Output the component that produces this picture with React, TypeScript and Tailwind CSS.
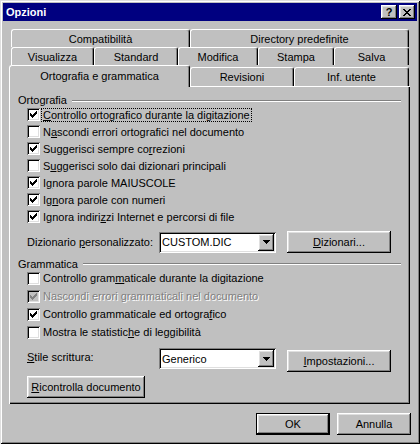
import React from 'react';

const raised =
  'shadow-[inset_-1px_-1px_0_#000,inset_1px_1px_0_#fff,inset_-2px_-2px_0_#808080,inset_2px_2px_0_#dfdfdf]';
const sunken =
  'shadow-[inset_1px_1px_0_#808080,inset_-1px_-1px_0_#fff,inset_2px_2px_0_#000,inset_-2px_-2px_0_#dfdfdf]';

const U = ({ children }: { children: React.ReactNode }) => (
  <span className="underline underline-offset-[1px]">{children}</span>
);

const CheckMark = ({ color }: { color: string }) => (
  <svg width="7" height="7" viewBox="0 0 7 7" shapeRendering="crispEdges" fill={color}>
    <rect x="6" y="0" width="1" height="1" />
    <rect x="5" y="1" width="2" height="1" />
    <rect x="0" y="2" width="1" height="1" />
    <rect x="4" y="2" width="3" height="1" />
    <rect x="0" y="3" width="2" height="1" />
    <rect x="3" y="3" width="3" height="1" />
    <rect x="0" y="4" width="5" height="1" />
    <rect x="1" y="5" width="3" height="1" />
    <rect x="2" y="6" width="1" height="1" />
  </svg>
);

type CheckProps = {
  checked?: boolean;
  disabled?: boolean;
  focused?: boolean;
  h: string;
  children: React.ReactNode;
};

const Check = ({ checked, disabled, focused, h, children }: CheckProps) => (
  <div className={`flex items-center ${h}`}>
    <div
      className={`w-[13px] h-[13px] shrink-0 flex items-center justify-center ${sunken} ${
        disabled ? 'bg-[#c0c0c0]' : 'bg-white'
      }`}
    >
      {checked && <CheckMark color={disabled ? '#808080' : '#000'} />}
    </div>
    <span
      className={`ml-[2px] px-[1px] leading-[12px] whitespace-nowrap ${
        focused ? 'outline outline-1 outline-dotted outline-black' : ''
      } ${disabled ? 'text-[#808080] [text-shadow:1px_1px_0_#fff]' : ''}`}
    >
      {children}
    </span>
  </div>
);

const Tab = ({ w, h, selected, children }: { w: string; h: string; selected?: boolean; children: React.ReactNode }) => (
  <div
    className={`${w} ${h} shrink-0 flex items-center justify-center bg-[#c0c0c0] border-l border-t border-r border-white border-r-black rounded-t-[3px] shadow-[inset_-1px_0_0_#808080] whitespace-nowrap ${
      selected ? 'relative z-10 self-start -ml-[2px] pb-[1px]' : 'pt-[1px]'
    }`}
  >
    {children}
  </div>
);

const Header = ({ label, className }: { label: string; className: string }) => (
  <div className={`flex items-center pl-[9px] pr-[9px] ${className}`}>
    <span className="leading-[12px]">{label}</span>
    <div className="flex-1 ml-[5px] mt-[1px] h-[2px] border-t border-t-[#808080] border-b border-b-white" />
  </div>
);

const Combo = ({ value }: { value: string }) => (
  <div className={`w-[117px] h-[21px] bg-white flex items-center p-[2px] ${sunken}`}>
    <span className="flex-1 pl-[1px] leading-[12px]">{value}</span>
    <div className={`w-[16px] h-[17px] bg-[#c0c0c0] flex items-center justify-center ${raised}`}>
      <svg width="7" height="4" viewBox="0 0 7 4" shapeRendering="crispEdges">
        <polygon points="0,0 7,0 3.5,4" fill="#000" />
      </svg>
    </div>
  </div>
);

const Btn = ({ w, className, children }: { w: string; className?: string; children: React.ReactNode }) => (
  <div className={`${w} h-[22px] bg-[#c0c0c0] flex items-center justify-center ${raised} ${className ?? ''}`}>
    {children}
  </div>
);

export default function App() {
  return (
    <div
      className={`w-[420px] h-[444px] bg-[#c0c0c0] p-[3px] flex flex-col text-[11px] text-black font-['Liberation_Sans',Arial,sans-serif] shadow-[inset_1px_1px_0_#dfdfdf,inset_-1px_-1px_0_#000,inset_2px_2px_0_#fff,inset_-2px_-2px_0_#808080]`}
    >
      {/* title bar */}
      <div className="h-[18px] bg-[#000080] flex items-center justify-between pl-[3px] pr-[2px]">
        <span className="text-white font-bold text-[11px] leading-[12px]">Opzioni</span>
        <div className="flex gap-[2px]">
          <div className={`w-[16px] h-[14px] bg-[#c0c0c0] flex items-center justify-center font-bold text-[11px] leading-[11px] ${raised}`}>
            ?
          </div>
          <div className={`w-[16px] h-[14px] bg-[#c0c0c0] flex items-center justify-center ${raised}`}>
            <svg width="8" height="7" viewBox="0 0 8 7" shapeRendering="crispEdges" fill="#000">
              <path d="M0 0h2v1h1v1h2v-1h1v-1h2v1h-1v1h-1v1h-1v1h1v1h1v1h1v1h-2v-1h-1v-1h-2v1h-1v1h-2v-1h1v-1h1v-1h1v-1h-1v-1h-1v-1h-1z" />
            </svg>
          </div>
        </div>
      </div>

      {/* tabs */}
      <div className="mt-[8px] pl-[8px] flex flex-col">
        <div className="flex">
          <Tab w="w-[179px]" h="h-[18px]">Compatibilità</Tab>
          <Tab w="w-[219px]" h="h-[18px]">Directory predefinite</Tab>
        </div>
        <div className="flex">
          <Tab w="w-[83px]" h="h-[18px]">Visualizza</Tab>
          <Tab w="w-[84px]" h="h-[18px]">Standard</Tab>
          <Tab w="w-[80px]" h="h-[18px]">Modifica</Tab>
          <Tab w="w-[76px]" h="h-[18px]">Stampa</Tab>
          <Tab w="w-[75px]" h="h-[18px]">Salva</Tab>
        </div>
        <div className="flex items-end h-[21px]">
          <Tab w="w-[181px]" h="h-[22px]" selected>
            Ortografia e grammatica
          </Tab>
          <Tab w="w-[104px]" h="h-[19px]">Revisioni</Tab>
          <Tab w="w-[115px]" h="h-[19px]">Inf. utente</Tab>
        </div>
      </div>

      {/* panel */}
      <div className="ml-[6px] w-[401px] h-[318px] pt-[8px] flex flex-col shadow-[inset_1px_1px_0_#fff,inset_-1px_-1px_0_#000,inset_-2px_-2px_0_#808080]">
        <Header label="Ortografia" className="h-[12px]" />
        <div className="pl-[18px] flex flex-col">
          <Check h="h-[17px]" checked focused>
            <U>C</U>ontrollo ortografico durante la digitazione
          </Check>
          <Check h="h-[17px]">
            N<U>a</U>scondi errori ortografici nel documento
          </Check>
          <Check h="h-[17px]" checked>
            Suggerisci sempre co<U>r</U>rezioni
          </Check>
          <Check h="h-[17px]">
            S<U>u</U>ggerisci solo dai dizionari principali
          </Check>
          <Check h="h-[17px]" checked>
            I<U>g</U>nora parole MAIUSCOLE
          </Check>
          <Check h="h-[17px]" checked>
            Ig<U>n</U>ora parole con numeri
          </Check>
          <Check h="h-[17px]" checked>
            Ignora indiri<U>z</U>zi Internet e percorsi di file
          </Check>
        </div>

        <div className="mt-[6px] pl-[18px] flex items-center">
          <span className="w-[132px] leading-[12px]">
            Dizionario <U>p</U>ersonalizzato:
          </span>
          <Combo value="CUSTOM.DIC" />
          <Btn w="w-[104px]" className="ml-[11px]">
            <U>D</U>izionari...
          </Btn>
        </div>

        <Header label="Grammatica" className="h-[11px] mt-[5px]" />
        <div className="pl-[18px] flex flex-col">
          <Check h="h-[18px]">
            Controllo gram<U>m</U>aticale durante la digitazione
          </Check>
          <Check h="h-[18px]" checked disabled>
            Nascondi errori grammaticali nel documento
          </Check>
          <Check h="h-[18px]" checked>
            Controllo grammaticale ed ortogra<U>f</U>ico
          </Check>
          <Check h="h-[18px]">
            Mostra le statistic<U>h</U>e di leggibilità
          </Check>
        </div>

        <div className="mt-[7px] pl-[18px] flex items-start">
          <span className="w-[132px] pt-[3px] leading-[12px]">
            <U>S</U>tile scrittura:
          </span>
          <Combo value="Generico" />
          <Btn w="w-[104px]" className="ml-[11px] mt-[2px]">
            <U>I</U>mpostazioni...
          </Btn>
        </div>

        <div className="mt-[4px] pl-[18px] flex">
          <Btn w="w-[118px]">
            <U>R</U>icontrolla documento
          </Btn>
        </div>
      </div>

      {/* dialog buttons */}
      <div className="mt-[9px] pr-[6px] flex justify-end gap-[7px]">
        <div className="w-[74px] h-[22px] border border-black">
          <div className={`w-full h-full flex items-center justify-center ${raised}`}>OK</div>
        </div>
        <Btn w="w-[74px]">Annulla</Btn>
      </div>
    </div>
  );
}
